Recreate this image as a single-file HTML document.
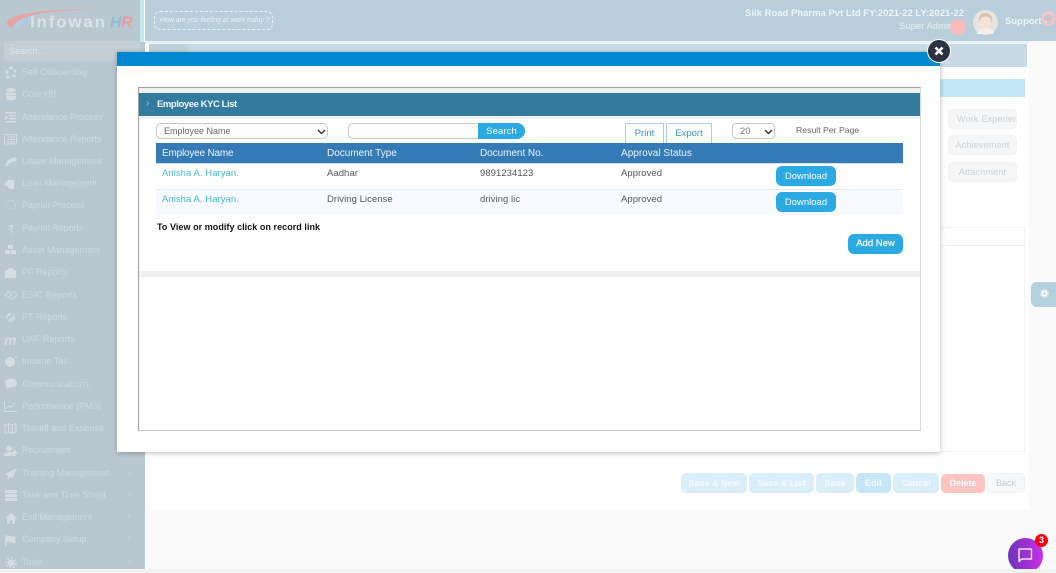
<!DOCTYPE html>
<html><head><meta charset="utf-8">
<style>
html,body{margin:0;padding:0;width:1056px;height:573px;overflow:hidden;background:#fafafa;font-family:"Liberation Sans",sans-serif;}
.a{position:absolute;white-space:nowrap}
.nav{position:absolute;left:22px;font-size:9px;color:#cfdae0;line-height:12px;letter-spacing:0;white-space:nowrap}
.arr{position:absolute;left:128px;font-size:9px;color:#cdd8dd}
.side{position:absolute;left:948px;width:69px;height:20px;background:#f5f6f7;border:1px solid #f1f2f3;border-radius:5px;font-size:9px;color:#ced1d3;line-height:18px;text-align:center;letter-spacing:.2px;box-sizing:border-box;overflow:hidden;white-space:nowrap}
.fb{position:absolute;top:473px;height:20px;line-height:20px;border-radius:5px;background:#d9eef9;color:#f4fbff;font-size:9px;font-weight:bold;text-align:center;letter-spacing:0}
.th{position:absolute;top:143px;height:20px;line-height:22px;font-size:10px;color:#eef4fa;white-space:nowrap}
.td{position:absolute;font-size:9.5px;color:#555;line-height:12px;letter-spacing:.05px;white-space:nowrap}
.dl{position:absolute;left:776px;width:60px;height:20px;background:#2aa9e3;border-radius:6px;color:#fff;font-size:9.5px;line-height:21px;text-align:center}
</style></head><body>

<!-- main bg -->
<div class="a" style="left:145px;top:41px;width:884px;height:469px;background:#fff"></div>
<div class="a" style="left:149px;top:44px;width:878px;height:23px;background:#c8dae3"></div>
<div class="a" style="left:149px;top:44px;width:39px;height:8px;background:#bfd1db"></div>
<div class="a" style="left:940px;top:79px;width:85px;height:18px;background:#c2e6f6"></div>
<div class="side" style="top:109px;text-align:left;padding-left:8px">Work Experien</div>
<div class="side" style="top:135px">Achievement</div>
<div class="side" style="top:162px">Attachment</div>
<div class="a" style="left:940px;top:227px;width:85px;height:225px;border:1px solid #f0f2f3;border-left:0;box-sizing:border-box"></div>
<div class="a" style="left:940px;top:227px;width:85px;height:19px;border-bottom:1px solid #eef0f1;box-sizing:border-box"></div>

<div class="fb" style="left:681px;width:66px">Save &amp; New</div>
<div class="fb" style="left:749px;width:65px">Save &amp; List</div>
<div class="fb" style="left:816px;width:38px">Save</div>
<div class="fb" style="left:856px;width:35px;background:#c5e6f6">Edit</div>
<div class="fb" style="left:893px;width:46px">Cancel</div>
<div class="fb" style="left:941px;top:474px;height:19px;line-height:18px;width:44px;background:#fdc3c0">Delete</div>
<div class="fb" style="left:987px;width:38px;background:#f7f8f9;color:#c8cbcd;font-weight:normal;border:1px solid #f0f1f2;box-sizing:border-box;line-height:18px">Back</div>

<!-- settings tab -->
<div class="a" style="left:1031px;top:282px;width:25px;height:25px;background:#b4d0de;border-radius:6px 0 0 6px"></div>
<svg class="a" style="left:1040px;top:289px" width="9" height="9" viewBox="0 0 11 11"><circle cx="5.5" cy="5.5" r="2.6" fill="none" stroke="#fff" stroke-width="2"/><circle cx="5.5" cy="5.5" r="4.6" fill="none" stroke="#fff" stroke-width="1.2" stroke-dasharray="1.6 1.3"/></svg>

<!-- header -->
<div class="a" style="left:145px;top:0;width:911px;height:41px;background:#b8cfdb"></div>
<div class="a" style="left:145px;top:41px;width:884px;height:3px;background:#e9f1f5"></div>
<div class="a" style="left:140px;top:0;width:4px;height:52px;background:#c3e7ee"></div>
<div class="a" style="left:154px;top:11px;width:119px;height:19px;border:1px dashed #e6eff3;border-radius:6px;box-sizing:border-box;color:#e8f0f4;font-size:7px;font-style:italic;line-height:17px;padding-left:5px;letter-spacing:-.05px">How are you feeling at work today ?</div>
<div class="a" style="right:92px;top:8px;font-size:9.5px;font-weight:bold;color:#eef4f7">Silk Road Pharma Pvt Ltd FY:2021-22 LY:2021-22</div>
<div class="a" style="left:899px;top:21px;font-size:9.5px;color:#e8f0f4">Super Admin</div>
<div class="a" style="left:950px;top:19px;width:16px;height:16px;border-radius:50%;background:#f8bcbc"></div>
<svg class="a" style="left:973px;top:10px" width="25" height="25" viewBox="0 0 25 25"><circle cx="12.5" cy="12.5" r="12.5" fill="#e8e3df"/><ellipse cx="12.5" cy="11" rx="5.5" ry="7" fill="#f5e2d4"/><path d="M6 13C5 5 9 3 12.5 3S20 5 19 13C18 8 16 6.5 12.5 6.5S7 8 6 13Z" fill="#d4c2ad"/><path d="M4 24c1-5 5-6 8.5-6s7.5 1 8.5 6z" fill="#f4efeb"/></svg>
<div class="a" style="left:1005px;top:16px;font-size:9.5px;font-weight:bold;color:#eef4f7">Support -</div>
<div class="a" style="left:1041px;top:11px;width:15px;height:15px;border:3px solid #f4c4c6;border-radius:50%;box-sizing:border-box"></div>
<div class="a" style="left:1047px;top:17px;width:4px;height:4px;border-radius:50%;background:#f4b4b8"></div>

<!-- sidebar -->
<div class="a" style="left:0;top:0;width:140px;height:42px;background:#b9c8cf"></div>
<div class="a" style="left:0;top:42px;width:145px;height:527px;background:#b9c8d0"></div>
<svg class="a" style="left:6px;top:8px" width="130" height="24" viewBox="0 0 130 24">
<path d="M1 14C6 5 40 1 95 1 55 2 22 5 11 14 8 17 6 19 7 20 3 19 0 17 1 14Z" fill="#e8a3a6"/>
<path d="M7 20C8 13 22 7 45 4 28 8 16 13 13 19Z" fill="#a9d0e6"/>
<text x="24" y="19.5" font-family="Liberation Sans,sans-serif" font-size="17" font-weight="bold" fill="#d8e2e7" letter-spacing="1.8">Infowan</text>
<text x="104" y="19.5" font-family="Liberation Sans,sans-serif" font-size="16" font-weight="bold" font-style="italic" fill="#8fbcd8">H</text><text x="115" y="19.5" font-family="Liberation Sans,sans-serif" font-size="16" font-weight="bold" font-style="italic" fill="#e89aa0">R</text>
</svg>
<div class="a" style="left:4px;top:41px;width:136px;height:20px;background:#c3cfd5;border-radius:2px;color:#dce5e9;font-size:9px;line-height:20px;text-indent:5px">Search...</div>

<div class="nav" style="top:66px">Self Onboarding</div>
<div class="nav" style="top:88px">Core HR</div>
<div class="nav" style="top:111px">Attendance Process</div>
<div class="nav" style="top:133px">Attendance Reports</div>
<div class="nav" style="top:155px">Leave Management</div>
<div class="nav" style="top:177px">Loan Management</div>
<div class="nav" style="top:199px">Payroll Process</div>
<div class="nav" style="top:222px">Payroll Reports</div>
<div class="nav" style="top:244px">Asset Management</div>
<div class="nav" style="top:266px">PF Reports</div>
<div class="nav" style="top:289px">ESIC Reports</div>
<div class="nav" style="top:311px">PT Reports</div>
<div class="nav" style="top:333px">LWF Reports</div>
<div class="nav" style="top:355px">Income Tax</div>
<div class="nav" style="top:378px">Communications</div>
<div class="nav" style="top:400px">Performance (PMS)</div>
<div class="nav" style="top:422px">Travell and Expense</div>
<div class="nav" style="top:444px">Recruitment</div>
<div class="nav" style="top:467px">Training Management</div>
<div class="nav" style="top:489px">Task and Time Sheet</div>
<div class="nav" style="top:511px">Exit Management</div>
<div class="nav" style="top:533px">Company Setup</div>
<div class="nav" style="top:556px">Tools</div>
<div class="arr" style="top:467px">›</div><div class="arr" style="top:489px">›</div><div class="arr" style="top:511px">›</div><div class="arr" style="top:533px">›</div><div class="arr" style="top:556px">›</div>

<svg class="a" style="left:4px;top:64px" width="14" height="504" viewBox="0 0 14 504" fill="#d3dde2" stroke="none">
<g transform="translate(0,2)"><circle cx="7" cy="2" r="1.8"/><circle cx="3" cy="6" r="1.8"/><circle cx="11" cy="5" r="1.5"/><circle cx="4" cy="11" r="1.8"/><circle cx="10" cy="10" r="1.8"/></g>
<g transform="translate(0,24)"><ellipse cx="7" cy="2" rx="5" ry="2"/><rect x="2" y="4.5" width="10" height="2.5"/><rect x="2" y="7.5" width="10" height="2.5"/><ellipse cx="7" cy="10.5" rx="5" ry="2"/></g>
<g transform="translate(0,47)"><rect x="1" y="1" width="11" height="1.5"/><rect x="5" y="4" width="7" height="1.5"/><rect x="5" y="7" width="7" height="1.5"/><rect x="1" y="10" width="11" height="1.5"/><path d="M1 4l3 2.5-3 2.5z"/></g>
<g transform="translate(0,69)" fill="none" stroke="#d3dde2"><rect x=".5" y="1.5" width="12" height="9.5"/><path d="M4 2v9M6 4h5M6 6.5h5M6 9h5"/></g>
<g transform="translate(0,91)"><path d="M1 11l3-6 7-3 2 3-7 3-3 3z"/></g>
<g transform="translate(0,113)"><path d="M3 3h7v9H6l-3-3z"/><rect x="1" y="5" width="2" height="4"/></g>
<g transform="translate(0,135)" fill="none" stroke="#d3dde2" stroke-dasharray="1.5 1.5"><circle cx="7" cy="6" r="4.5"/></g>
<g transform="translate(0,158)"><text x="3.5" y="11" font-size="11" font-family="DejaVu Sans,sans-serif">₹</text></g>
<g transform="translate(0,180)"><rect x="4" y="1" width="5" height="4"/><rect x="1" y="6" width="5" height="4"/><rect x="7" y="6" width="5" height="4"/></g>
<g transform="translate(0,203)"><rect x="1" y="3" width="11" height="8" rx="1"/><rect x="4" y="1" width="5" height="2"/></g>
<g transform="translate(0,225)" fill="none" stroke="#d3dde2"><path d="M1 6l4-4 3 3-3 3zM6 9l3 1 4-4-4-4"/></g>
<g transform="translate(0,247)"><path d="M3 11L11 3v2l-6 6zM6 11l5-5v2l-3 3zM2 8l6-6H5L2 5z"/></g>
<g transform="translate(0,270)"><text x="0" y="11" font-size="14" font-weight="bold" font-style="italic" font-family="Liberation Sans,sans-serif">m</text></g>
<g transform="translate(0,291)"><circle cx="6" cy="7" r="5"/><circle cx="12" cy="2" r="1"/></g>
<g transform="translate(0,314)"><ellipse cx="7" cy="5" rx="6" ry="4.5"/><path d="M3 8l-1 4 4-3z"/></g>
<g transform="translate(0,336)" fill="none" stroke="#d3dde2"><path d="M.5 1v10.5h12M2 9l3-3 2 1 4-4"/></g>
<g transform="translate(0,358)" fill="none" stroke="#d3dde2"><path d="M1 3l3.5-1.5 4 1.5L12 1.5V10L8.5 11.5l-4-1.5L1 11.5zM4.5 1.5V10M8.5 3v8.5"/></g>
<g transform="translate(0,381)"><circle cx="5" cy="3.5" r="2.8"/><path d="M0 11c0-3 2-4 5-4s5 1 5 4z"/><path d="M10 5h1.5v2H14v1.500h-2.500V11H10V8.500H8V7h2z"/></g>
<g transform="translate(0,403)"><path d="M13 1L1 7l3 1.5L3.5 12l2.500-2 2.500 1z"/></g>
<g transform="translate(0,425)"><rect x="1" y="1" width="12" height="3"/><rect x="1" y="5" width="12" height="3"/><rect x="1" y="9" width="12" height="3"/></g>
<g transform="translate(0,448)"><path d="M7 1l6 5.500h-2V12H8.500V8.500h-3V12H3V6.500H1z"/></g>
<g transform="translate(0,470)"><rect x="1" y="1" width="1.5" height="11"/><path d="M2.500 2.500c3-1.500 4 .5 9 0v6c-5 .5-6-1.500-9 0z"/></g>
<g transform="translate(0,492)"><circle cx="7" cy="7" r="3.5"/><circle cx="7" cy="7" r="5" fill="none" stroke="#d3dde2" stroke-width="1.8" stroke-dasharray="2 1.9"/></g>
</svg>

<!-- modal -->
<div class="a" style="left:117px;top:52px;width:823px;height:400px;background:#fff;box-shadow:0 1px 5px rgba(0,0,0,.28)"></div>
<div class="a" style="left:117px;top:52px;width:823px;height:14px;background:#0088d1"></div>
<div class="a" style="left:138px;top:87px;width:783px;height:344px;border:1px solid #a0a0a0;border-bottom-color:#c8c8c8;border-right-color:#dcdcdc;box-sizing:border-box;background:#fff"></div>
<div class="a" style="left:139px;top:88px;width:781px;height:5px;background:#f0f0f0"></div>
<div class="a" style="left:139px;top:93px;width:781px;height:23px;background:#337b9e"></div>
<div class="a" style="left:139px;top:116px;width:781px;height:3px;background:#f0f0f0"></div>
<div class="a" style="left:146px;top:98px;font-size:10px;color:#a9c9d8;line-height:12px">›</div>
<div class="a" style="left:157px;top:99px;font-size:9.5px;font-weight:bold;color:#f2f7fa;line-height:12px;letter-spacing:-.43px">Employee KYC List</div>

<!-- controls -->
<div class="a" style="left:156px;top:123px;width:172px;height:16px;border:1px solid #c8c8c8;border-radius:5px;box-sizing:border-box;background:#fff;font-size:9px;color:#666;line-height:15px;padding-left:7px">Employee Name</div>
<svg class="a" style="left:317px;top:129px" width="9" height="6" viewBox="0 0 9 6"><path d="M1 1l3.5 3.5L8 1" fill="none" stroke="#333" stroke-width="1.4"/></svg>
<div class="a" style="left:348px;top:123px;width:177px;height:16px;border:1px solid #c8c8c8;border-radius:5px 8px 8px 5px;box-sizing:border-box;background:#fff"></div>
<div class="a" style="left:478px;top:123px;width:47px;height:16px;background:#2aa9e3;border-radius:0 8px 8px 0;color:#fff;font-size:9.5px;line-height:17px;text-align:center;letter-spacing:.1px">Search</div>
<div class="a" style="left:625px;top:123px;width:39px;height:20px;border:1px solid #a8d0ea;border-bottom:0;box-sizing:border-box;color:#3a94d0;font-size:9.5px;line-height:20px;text-align:center">Print</div>
<div class="a" style="left:666px;top:123px;width:46px;height:20px;border:1px solid #a8d0ea;border-bottom:0;box-sizing:border-box;color:#3a94d0;font-size:9.5px;line-height:20px;text-align:center">Export</div>
<div class="a" style="left:732px;top:123px;width:43px;height:16px;border:1px solid #c8c8c8;border-radius:4px;box-sizing:border-box;font-size:9.5px;color:#777;line-height:15px;padding-left:7px">20</div>
<svg class="a" style="left:764px;top:129px" width="9" height="6" viewBox="0 0 9 6"><path d="M1 1l3.5 3.5L8 1" fill="none" stroke="#333" stroke-width="1.4"/></svg>
<div class="a" style="left:796px;top:124px;font-size:8.7px;color:#666;line-height:12px">Result Per Page</div>

<!-- table -->
<div class="a" style="left:156px;top:143px;width:747px;height:20px;background:#337ab7"></div>
<div class="a" style="left:156px;top:163px;width:747px;height:1px;background:#cfe0ee"></div>
<div class="th" style="left:162px;letter-spacing:-.2px">Employee Name</div>
<div class="th" style="left:327px">Document Type</div>
<div class="th" style="left:480px;letter-spacing:-.05px">Document No.</div>
<div class="th" style="left:621px;letter-spacing:.02px">Approval Status</div>

<div class="a" style="left:156px;top:189px;width:747px;height:1px;background:#e4ebf2"></div>
<div class="a" style="left:156px;top:190px;width:747px;height:25px;background:#f7fbff"></div>

<div class="td" style="left:162px;top:168px;color:#45b9cb">Anisha A. Haryan.</div>
<div class="td" style="left:327px;top:168px">Aadhar</div>
<div class="td" style="left:480px;top:168px">9891234123</div>
<div class="td" style="left:621px;top:168px">Approved</div>
<div class="dl" style="top:166px">Download</div>

<div class="td" style="left:162px;top:194px;color:#45b9cb">Anisha A. Haryan.</div>
<div class="td" style="left:327px;top:194px">Driving License</div>
<div class="td" style="left:480px;top:194px">driving lic</div>
<div class="td" style="left:621px;top:194px">Approved</div>
<div class="dl" style="top:192px">Download</div>

<div class="a" style="left:157px;top:221px;font-size:9px;font-weight:bold;color:#111;line-height:12px;letter-spacing:.05px">To View or modify click on record link</div>
<div class="a" style="left:848px;top:234px;width:55px;height:20px;background:#2aa9e3;border-radius:6px;color:#fff;font-size:9.5px;line-height:20px;text-align:center;-webkit-text-stroke:.2px #fff">Add New</div>
<div class="a" style="left:139px;top:271px;width:781px;height:6px;background:#f0f0f0"></div>

<!-- close -->
<div class="a" style="left:927px;top:39px;width:24px;height:24px;border-radius:50%;background:#2b3342;border:1px solid #fff;box-sizing:border-box"></div>
<svg class="a" style="left:934px;top:46px" width="10" height="10" viewBox="0 0 10 10"><path d="M1.5 1.5l7 7M8.5 1.5l-7 7" stroke="#fff" stroke-width="2.6"/></svg>

<!-- chat -->
<div class="a" style="left:1008px;top:538px;width:35px;height:35px;border-radius:50%;background:linear-gradient(90deg,#6d34b8,#c92ee8)"></div>
<svg class="a" style="left:1017px;top:547px" width="16" height="16" viewBox="0 0 16 16"><path d="M2 2h12.5v10H4.5L2 14.5z" fill="none" stroke="#fff" stroke-width="1.3" stroke-linejoin="round"/></svg>
<div class="a" style="left:1035px;top:534px;width:13px;height:13px;border-radius:50%;background:#f5000f;color:#fff;font-size:9px;font-weight:bold;line-height:13px;text-align:center">3</div>
<div class="a" style="left:0;top:569px;width:1056px;height:4px;background:#f2f2f2"></div>
</body></html>
